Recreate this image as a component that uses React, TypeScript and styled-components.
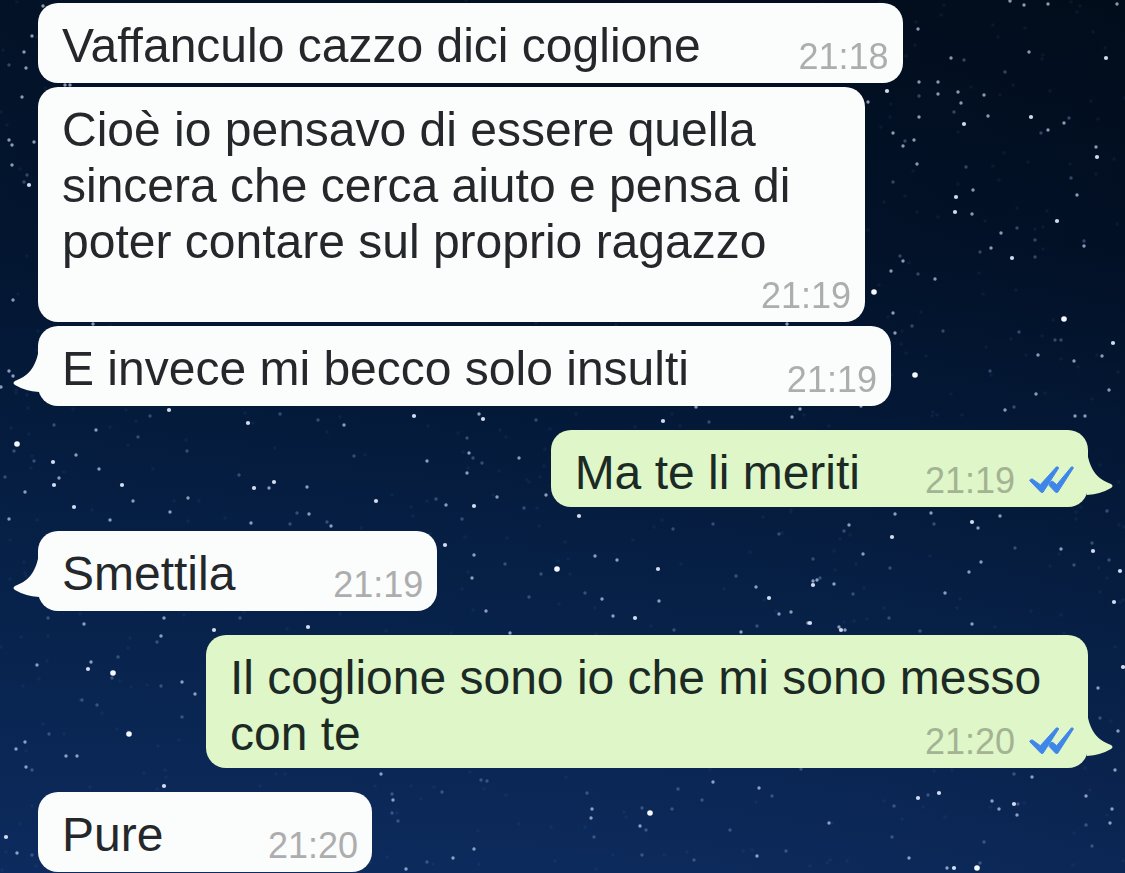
import React from "react";
import styled, { createGlobalStyle, css } from "styled-components";

const GlobalStyle = createGlobalStyle`
  * { box-sizing: border-box; }
  body {
    margin: 0;
    background: #04132f;
    font-family: "Liberation Sans", Arial, sans-serif;
  }
`;

/* ---------- night sky ---------- */

const BIG = [
  [874, 292], [1064, 319], [915, 375], [17, 444], [129, 734], [113, 673], [977, 868], [650, 813], [557, 569],
];

const BRIGHT = [
  [887, 91], [1031, 117], [1097, 157], [956, 197], [955, 212], [1012, 258], [1113, 343], [964, 124],
  [169, 410], [248, 423], [414, 416], [483, 419], [474, 506], [53, 462], [29, 185], [254, 488], [274, 482],
  [579, 516], [445, 545], [658, 569], [635, 618], [892, 537], [972, 522], [813, 585], [769, 598], [810, 623],
  [841, 630], [1093, 551], [1120, 571], [1114, 602], [308, 627], [214, 630], [1106, 58], [1057, 221],
  [663, 421], [1014, 804], [918, 798], [939, 793], [954, 868], [1123, 667], [74, 507], [122, 485], [54, 485],
  [88, 669], [376, 501], [164, 786], [6, 837],
];

const MEDIUM = [
  [1010, 1], [1024, 5], [1048, 4], [1117, 4], [918, 29], [951, 58], [1029, 52], [919, 82], [938, 82],
  [938, 94], [958, 92], [961, 103], [984, 95], [988, 116], [919, 117], [1064, 123], [1048, 130], [893, 133],
  [914, 140], [903, 146], [917, 164], [1096, 147], [1077, 195], [973, 190], [972, 214], [1001, 233],
  [991, 248], [1084, 246], [903, 261], [891, 271], [935, 279], [893, 313], [895, 333], [1038, 355],
  [1074, 361], [1102, 356], [1109, 390], [1036, 394], [1005, 410], [1075, 416], [1085, 416], [868, 102],
  [787, 324], [696, 407], [792, 417], [800, 409], [861, 406], [43, 6], [32, 36], [24, 52], [26, 68],
  [22, 97], [65, 85], [70, 85], [9, 140], [12, 145], [34, 142], [12, 165], [13, 300], [93, 324], [9, 371],
  [13, 376], [1, 387], [344, 425], [479, 414], [96, 430], [76, 455], [99, 469], [59, 478], [25, 492],
  [133, 501], [9, 519], [110, 520], [170, 512], [188, 498], [269, 488], [307, 487], [309, 514], [251, 523],
  [331, 526], [427, 461], [446, 505], [497, 497], [467, 473], [469, 453], [519, 458], [546, 495], [474, 555],
  [472, 578], [486, 611], [595, 556], [617, 560], [659, 601], [602, 599], [613, 616], [849, 525], [895, 514],
  [931, 513], [978, 528], [1000, 516], [863, 554], [813, 581], [817, 580], [834, 584], [756, 587],
  [779, 614], [791, 612], [808, 623], [839, 627], [845, 630], [741, 632], [945, 593], [969, 572],
  [981, 562], [1061, 549], [972, 624], [510, 633], [84, 624], [164, 618], [161, 636], [37, 665], [91, 662],
  [182, 682], [195, 694], [25, 742], [16, 749], [26, 767], [66, 756], [77, 756], [17, 853], [381, 774],
  [393, 800], [592, 809], [591, 818], [640, 826], [713, 782], [759, 788], [829, 823], [757, 856],
  [474, 849], [453, 858], [406, 869], [909, 858], [992, 801], [999, 809], [1017, 815], [1032, 777],
  [1086, 796], [1112, 809], [1110, 823], [947, 868], [1115, 770], [1098, 688], [1118, 731],
];

const FAINT = [
  [964, 60], [1005, 72], [919, 96], [954, 112], [1069, 118], [1041, 133], [905, 141], [966, 167],
  [1071, 178], [893, 182], [1017, 228], [980, 252], [1035, 240], [1035, 257], [1084, 241], [900, 256],
  [918, 274], [912, 326], [943, 331], [1019, 332], [1055, 340], [1061, 340], [990, 371], [1014, 407],
  [709, 422], [9, 65], [27, 175], [24, 182], [150, 416], [280, 414], [318, 420], [536, 420], [54, 425],
  [138, 437], [14, 451], [34, 461], [5, 477], [187, 451], [297, 513], [290, 524], [327, 522], [354, 456],
  [436, 499], [462, 519], [473, 458], [482, 463], [467, 438], [524, 508], [239, 475], [505, 564], [541, 574],
  [585, 593], [529, 597], [673, 529], [713, 524], [779, 534], [844, 531], [934, 524], [890, 568], [813, 559],
  [820, 578], [736, 576], [853, 594], [757, 626], [674, 630], [1015, 548], [1092, 543], [1074, 565],
  [920, 631], [889, 618], [1107, 511], [1109, 560], [48, 618], [240, 618], [157, 642], [118, 657],
  [112, 678], [161, 686], [97, 705], [82, 700], [182, 717], [49, 734], [32, 770], [32, 855], [392, 794],
  [398, 821], [392, 813], [442, 792], [481, 780], [487, 781], [587, 793], [594, 837], [642, 808],
  [646, 830], [672, 809], [678, 789], [772, 796], [702, 800], [730, 830], [801, 769], [786, 851],
  [642, 855], [694, 860], [427, 862], [928, 795], [892, 837], [894, 806], [1018, 804], [1014, 774],
  [1086, 825], [980, 863], [984, 842], [1092, 846], [1100, 718],
];

/* Barely visible dust, spread by a fixed-seed generator so it never moves. */
const DUST = (() => {
  let seed = 77;
  const next = () => {
    seed = (seed * 16807) % 2147483647;
    return seed / 2147483647;
  };
  return Array.from({ length: 650 }, () => [Math.round(next() * 1125), Math.round(next() * 873)]);
})();

const LAYERS = [
  { points: DUST, radius: 1.8, color: "#5a7fd0", opacity: 0.09 },
  { points: FAINT, radius: 1.7, color: "#8aa4dc", opacity: 0.36 },
  { points: MEDIUM, radius: 1.7, color: "#c4d4f2", opacity: 0.7 },
  { points: BRIGHT, radius: 2.1, color: "#e4edff", opacity: 0.92 },
  { points: BIG, radius: 2.8, color: "#f4f8ff", opacity: 1 },
];

const SkySvg = styled.svg`
  position: fixed;
  inset: 0;
  width: 100%;
  height: 100%;
  z-index: -1;
`;

function Sky() {
  return (
    <SkySvg viewBox="0 0 1125 873" preserveAspectRatio="xMidYMin slice" aria-hidden="true">
      <defs>
        <linearGradient id="night" x1="0" y1="0" x2="0" y2="1">
          <stop offset="0" stopColor="#020d1c" />
          <stop offset="0.28" stopColor="#021127" />
          <stop offset="0.5" stopColor="#041938" />
          <stop offset="0.72" stopColor="#072148" />
          <stop offset="1" stopColor="#0d2a5c" />
        </linearGradient>
        <linearGradient id="side" x1="0" y1="0" x2="1" y2="0">
          <stop offset="0" stopColor="#0a3068" stopOpacity="0.14" />
          <stop offset="0.5" stopColor="#0a3068" stopOpacity="0.05" />
          <stop offset="1" stopColor="#000814" stopOpacity="0.1" />
        </linearGradient>
      </defs>
      <rect width="1125" height="873" fill="url(#night)" />
      <rect width="1125" height="873" fill="url(#side)" />
      {LAYERS.map(({ points, radius, color, opacity }) => (
        <g key={radius + color} fill={color} opacity={opacity}>
          {points.map(([x, y], i) => (
            <circle key={i} cx={x} cy={y} r={radius} />
          ))}
        </g>
      ))}
    </SkySvg>
  );
}

/* ---------- conversation ---------- */

const INCOMING = "#fbfcfc";
const OUTGOING = "#dff6c8";

const Conversation = styled.main`
  display: flex;
  flex-direction: column;
  gap: 24px;
  min-height: 100vh;
  padding: 3px 37px 1px 38px;
`;

const Group = styled.section<{ $own?: boolean }>`
  display: flex;
  flex-direction: column;
  align-items: ${(p) => (p.$own ? "flex-end" : "flex-start")};
  gap: 4px;
`;

const Bubble = styled.article<{ $own?: boolean; $limit: number }>`
  position: relative;
  display: grid;
  min-width: 334px;
  max-width: min(100%, ${(p) => p.$limit}px);
  padding: 15px 14px 6px 24px;
  border-radius: 20px;
  background: ${(p) => (p.$own ? OUTGOING : INCOMING)};
  color: ${(p) => (p.$own ? "#1c2a25" : "#25282b")};
`;

const Body = styled.p<{ $own?: boolean; $timeBelow?: boolean }>`
  grid-area: 1 / 1;
  margin: 0;
  padding-bottom: ${(p) => (p.$own ? 0 : p.$timeBelow ? 46 : 3)}px;
  font-size: 48px;
  line-height: 56px;
`;

/* Keeps the end of the last line clear of the time stamp. */
const StampRoom = styled.span<{ $own?: boolean }>`
  display: inline-block;
  width: ${(p) => (p.$own ? 214 : 188)}px;
`;

const Stamp = styled.footer<{ $own?: boolean }>`
  grid-area: 1 / 1;
  align-self: end;
  justify-self: end;
  display: flex;
  align-items: baseline;
  gap: 14px;
  margin-bottom: 2px;
  font-size: 36px;
  line-height: 36px;
  color: ${(p) => (p.$own ? "#a3b393" : "#adadae")};
`;

const TailSvg = styled.svg<{ $own?: boolean }>`
  position: absolute;
  width: 27px;
  height: 48px;
  ${(p) =>
    p.$own
      ? css`
          right: -26px;
          bottom: 10px;
        `
      : css`
          left: -26px;
          bottom: 12px;
          transform: scaleX(-1);
        `}
`;

function Tail({ own }: { own?: boolean }) {
  return (
    <TailSvg $own={own} viewBox="0 0 27 48" aria-hidden="true">
      <path
        d="M0 3 C3 19 8 29 24 35 Q27 37 24 39 Q14 45 0 46 Z"
        fill={own ? OUTGOING : INCOMING}
      />
    </TailSvg>
  );
}

function ReadTicks() {
  return (
    <svg width="45" height="27" viewBox="0 0 135 81" role="img" aria-label="Letto">
      <g fill="#3f86ea" stroke="#3f86ea" strokeWidth="3" strokeLinejoin="round">
        <path d="M2 44 Q3 38 10 39 L34 56 L82 3 Q87 1 89 6 L42 79 L36 79 Z" />
        <path d="M63 50 Q65 45 71 46 L83 56 L127 3 Q132 1 133 6 L86 79 L80 79 L60 58 Z" />
      </g>
    </svg>
  );
}

type MessageProps = {
  text: string;
  time: string;
  own?: boolean;
  tail?: boolean;
  timeBelow?: boolean;
  limit?: number;
};

function Message({ text, time, own, tail, timeBelow, limit = 882 }: MessageProps) {
  return (
    <Bubble $own={own} $limit={limit}>
      {tail && <Tail own={own} />}
      <Body $own={own} $timeBelow={timeBelow}>
        {text}
        {!timeBelow && <StampRoom $own={own} />}
      </Body>
      <Stamp $own={own}>
        <time>{time}</time>
        {own && <ReadTicks />}
      </Stamp>
    </Bubble>
  );
}

export default function App() {
  return (
    <>
      <GlobalStyle />
      <Sky />
      <Conversation>
        <Group>
          <Message text="Vaffanculo cazzo dici coglione" time="21:18" />
          <Message
            text="Cioè io pensavo di essere quella sincera che cerca aiuto e pensa di poter contare sul proprio ragazzo"
            time="21:19"
            timeBelow
            limit={827}
          />
          <Message text="E invece mi becco solo insulti" time="21:19" tail />
        </Group>
        <Group $own>
          <Message text="Ma te li meriti" time="21:19" own tail />
        </Group>
        <Group>
          <Message text="Smettila" time="21:19" tail />
        </Group>
        <Group $own>
          <Message text="Il coglione sono io che mi sono messo con te" time="21:20" own tail />
        </Group>
        <Group>
          <Message text="Pure" time="21:20" />
        </Group>
      </Conversation>
    </>
  );
}
